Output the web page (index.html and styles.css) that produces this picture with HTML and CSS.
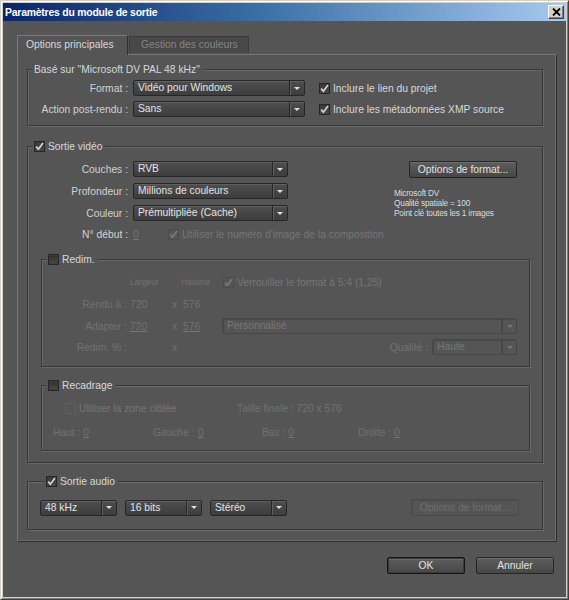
FILE: index.html
```html
<!DOCTYPE html>
<html lang="fr">
<head>
<meta charset="utf-8">
<title>Paramètres du module de sortie</title>
<link rel="stylesheet" href="styles.css">
</head>
<body>
<div class="window">
  <div class="titlebar">
    <span class="title">Paramètres du module de sortie</span>
    <span class="close"><svg width="9" height="8" viewBox="0 0 9 8"><path d="M1 0.5 L8 7.5 M8 0.5 L1 7.5" stroke="#000" stroke-width="1.8"/></svg></span>
  </div>
  <div class="client">
    <div class="tabs">
      <div class="tab active">Options principales</div>
      <div class="tab inactive">Gestion des couleurs</div>
    </div>
    <div class="panel">
      <fieldset class="group g-base">
        <legend>Basé sur "Microsoft DV PAL 48 kHz"</legend>
        <div class="base-grid">
          <span class="lbl">Format :</span>
          <div class="dd w172"><span class="dd-val">Vidéo pour Windows</span><span class="dd-btn"></span></div>
          <div class="chk"><span class="cb on"><svg width="9" height="9" viewBox="0 0 9 9"><path d="M1.2 4.6 L3.4 7.2 L8 1" /></svg></span>Inclure le lien du projet</div>
          <span class="lbl">Action post-rendu :</span>
          <div class="dd w172"><span class="dd-val">Sans</span><span class="dd-btn"></span></div>
          <div class="chk"><span class="cb on"><svg width="9" height="9" viewBox="0 0 9 9"><path d="M1.2 4.6 L3.4 7.2 L8 1" /></svg></span>Inclure les métadonnées XMP source</div>
        </div>
      </fieldset>

      <fieldset class="group g-video">
        <legend><span class="cb on"><svg width="9" height="9" viewBox="0 0 9 9"><path d="M1.2 4.6 L3.4 7.2 L8 1" /></svg></span>Sortie vidéo</legend>
        <div class="video-top">
          <div class="video-left">
            <div class="frow"><span class="lbl">Couches :</span><div class="dd w155"><span class="dd-val">RVB</span><span class="dd-btn"></span></div></div>
            <div class="frow"><span class="lbl">Profondeur :</span><div class="dd w155"><span class="dd-val">Millions de couleurs</span><span class="dd-btn"></span></div></div>
            <div class="frow"><span class="lbl">Couleur :</span><div class="dd w155"><span class="dd-val">Prémultipliée (Cache)</span><span class="dd-btn"></span></div></div>
          </div>
          <div class="video-right">
            <div class="btn fmt">Options de format...</div>
            <div class="info">
              <div>Microsoft DV</div>
              <div>Qualité spatiale = 100</div>
              <div>Point clé toutes les 1 images</div>
            </div>
          </div>
        </div>
        <div class="start-row">
          <span class="lbl">N° début :</span>
          <span class="num dis"><u>0</u></span>
          <span class="chk dis"><span class="cb dis"><svg width="9" height="9" viewBox="0 0 9 9"><path d="M1.2 4.6 L3.4 7.2 L8 1" /></svg></span>Utiliser le numéro d'image de la composition</span>
        </div>

        <fieldset class="group sub g-redim">
          <legend><span class="cb off"></span>Redim.</legend>
          <div class="rrow head">
            <span class="r-label"></span>
            <span class="r-v1 small">Largeur</span>
            <span class="r-x"></span>
            <span class="r-v2 small">Hauteur</span>
            <span class="chk dis"><span class="cb dis"><svg width="9" height="9" viewBox="0 0 9 9"><path d="M1.2 4.6 L3.4 7.2 L8 1" /></svg></span>Verrouiller le format à 5:4 (1,25)</span>
          </div>
          <div class="rrow">
            <span class="r-label">Rendu à :</span>
            <span class="r-v1">720</span>
            <span class="r-x">x</span>
            <span class="r-v2">576</span>
          </div>
          <div class="rrow">
            <span class="r-label">Adapter :</span>
            <span class="r-v1"><u>720</u></span>
            <span class="r-x">x</span>
            <span class="r-v2"><u>576</u></span>
            <div class="dd dis grow"><span class="dd-val">Personnalisé</span><span class="dd-btn"></span></div>
          </div>
          <div class="rrow">
            <span class="r-label">Redim. % :</span>
            <span class="r-v1"></span>
            <span class="r-x">x</span>
            <span class="r-v2"></span>
            <span class="q-label">Qualité :</span>
            <div class="dd dis w85"><span class="dd-val">Haute</span><span class="dd-btn"></span></div>
          </div>
        </fieldset>

        <fieldset class="group sub g-crop">
          <legend><span class="cb off"></span>Recadrage</legend>
          <div class="crow">
            <span class="chk dis zone"><span class="cb dis empty"></span>Utiliser la zone ciblée</span>
            <span class="final">Taille finale : 720 x 576</span>
          </div>
          <div class="crow">
            <span class="c1">Haut : <u>0</u></span>
            <span class="c2">Gauche : <u>0</u></span>
            <span class="c3">Bas : <u>0</u></span>
            <span class="c4">Droite : <u>0</u></span>
          </div>
        </fieldset>
      </fieldset>

      <fieldset class="group g-audio">
        <legend><span class="cb on"><svg width="9" height="9" viewBox="0 0 9 9"><path d="M1.2 4.6 L3.4 7.2 L8 1" /></svg></span>Sortie audio</legend>
        <div class="audio-row">
          <div class="dd w77"><span class="dd-val">48 kHz</span><span class="dd-btn"></span></div>
          <div class="dd w77"><span class="dd-val">16 bits</span><span class="dd-btn"></span></div>
          <div class="dd w77"><span class="dd-val">Stéréo</span><span class="dd-btn"></span></div>
          <div class="btn fmt disabled">Options de format...</div>
        </div>
      </fieldset>
    </div>
    <div class="buttons">
      <div class="btn dlg default">OK</div>
      <div class="btn dlg">Annuler</div>
    </div>
  </div>
</div>
</body>
</html>
```
FILE: styles.css
```css
* { box-sizing: border-box; }
html, body { margin: 0; padding: 0; }
body {
  width: 569px;
  height: 600px;
  overflow: hidden;
  background: #d4d0c8;
  font-family: "Liberation Sans", Arial, sans-serif;
  font-size: 10.3px;
  color: #d4d4d4;
}
.window {
  width: 569px;
  height: 600px;
  border: 1px solid;
  border-color: #d4d0c8 #404040 #404040 #d4d0c8;
  box-shadow: inset 1px 1px 0 #ffffff, inset -1px -1px 0 #808080;
  padding: 2px;
  background: #d4d0c8;
  display: flex;
  flex-direction: column;
}
.titlebar {
  height: 18px;
  flex: none;
  background: linear-gradient(90deg, #0a246a 0%, #3a6ea5 45%, #a6caf0 100%);
  display: flex;
  align-items: center;
  justify-content: space-between;
  padding: 0 2px 0 2px;
}
.title {
  color: #fff;
  font-weight: bold;
  font-size: 10.4px;
  letter-spacing: -0.2px;
}
.close {
  width: 16px;
  height: 14px;
  background: #d4d0c8;
  border: 1px solid;
  border-color: #fff #404040 #404040 #fff;
  box-shadow: inset -1px -1px 0 #808080;
  display: flex;
  align-items: center;
  justify-content: center;
}
.client {
  flex: 1;
  background: #555555;
  padding: 14px 11px 0 14px;
  display: flex;
  flex-direction: column;
}
.tabs {
  display: flex;
  align-items: flex-end;
  height: 19px;
  position: relative;
  z-index: 1;
}
.tab {
  height: 17px;
  line-height: 16px;
  padding: 0 9px;
  white-space: nowrap;
}
.tab.active {
  height: 20px;
  margin-bottom: -1px;
  width: 111px;
  padding: 1px 8px 0;
  background: #555555;
  border: 1px solid;
  border-bottom: none;
  border-color: #7a7a7a #303030 transparent #7a7a7a;
  color: #d8d8d8;
}
.tab.inactive {
  width: 120px;
  margin-bottom: 1px;
  margin-left: 1px;
  background: #484848;
  border: 1px solid #3c3c3c;
  border-bottom: none;
  color: #858585;
  padding-left: 11px;
}
.panel {
  width: 540px;
  height: 488px;
  border: 1px solid;
  border-color: #767676 #2e2e2e #2e2e2e #767676;
  box-shadow: inset -1px -1px 0 #6a6a6a;
  padding: 8px 0 0 9px;
}

/* group boxes */
.group {
  margin: 0;
  padding: 0;
  min-width: 0;
  border: 1px solid #383838;
  box-shadow: inset 1px 1px 0 #686868, 1px 1px 0 #686868;
  width: 516px;
}
.group legend {
  margin-left: 4px;
  padding: 0 3px 0 2px;
  line-height: 13px;
  height: 13px;
  background: #555555;
  color: #d8d8d8;
  display: flex;
  align-items: center;
  gap: 3px;
}
.g-base { padding: 4px 0 8px 0; }
.g-video { margin-top: 14px; padding: 8px 0 11px 0; }
.g-audio { margin-top: 12px; padding: 11px 23px 13px 12px; }
.sub { width: 489px; margin-left: 13px; }
.g-redim { margin-top: 12px; padding: 8px 12px 11px 0; }
.g-crop { margin-top: 12px; padding: 8px 12px 10px 0; }

.lbl { text-align: right; white-space: nowrap; color: #d2d2d2; }

.base-grid {
  display: grid;
  grid-template-columns: 100px 172px auto;
  column-gap: 5px;
  row-gap: 5px;
  align-items: center;
}
.base-grid .chk { margin-left: 9px; }

/* checkbox */
.chk { display: flex; align-items: center; gap: 3px; white-space: nowrap; color: #d8d8d8; }
.chk.dis { color: #767676; }
.cb {
  width: 11px;
  height: 11px;
  flex: none;
  display: inline-flex;
  align-items: center;
  justify-content: center;
  border: 1px solid #262626;
  background: linear-gradient(#3a3a3a, #474747);
}
.cb svg path { fill: none; stroke: #d6d6d6; stroke-width: 1.7; }
.cb.off { background: linear-gradient(#2f2f2f, #4a4a4a); box-shadow: inset 0 0 0 1px #3e3e3e; }
.cb.dis { border-color: #4c4c4c; background: transparent; }
.cb.dis svg path { stroke: #7a7a7a; }
.cb.empty { border: 1px dotted #6a6a6a; }

/* dropdowns */
.dd {
  height: 16px;
  display: flex;
  border: 1px solid #262626;
  border-radius: 2px;
  background: linear-gradient(#4e4e4e, #3d3d3d);
  box-shadow: inset 0 1px 0 #606060;
  color: #e4e4e4;
}
.dd-val { flex: 1; padding-left: 4px; line-height: 14px; white-space: nowrap; overflow: hidden; }
.dd-btn {
  width: 15px;
  flex: none;
  border-left: 1px solid #262626;
  box-shadow: inset 1px 0 0 #5e5e5e;
  display: flex;
  align-items: center;
  justify-content: center;
}
.dd-btn::after {
  content: "";
  border-left: 3px solid transparent;
  border-right: 3px solid transparent;
  border-top: 3px solid #e0e0e0;
}
.dd.dis {
  background: #555555;
  border-color: #474747;
  box-shadow: inset 1px 1px 0 #4a4a4a;
  color: #777;
}
.dd.dis .dd-btn { border-left: 2px double #474747; box-shadow: none; }
.dd.dis .dd-btn::after { border-top-color: #777; }
.w172 { width: 172px; }
.w155 { width: 155px; }
.w85 { width: 85px; }
.w77 { width: 77px; }
.grow { flex: 1; }

/* video */
.video-top { display: flex; }
.video-left { width: 260px; display: flex; flex-direction: column; gap: 6px; }
.frow { display: flex; align-items: center; gap: 5px; }
.frow .lbl { width: 100px; }
.video-right { margin-left: 106px; }
.btn {
  height: 17px;
  border: 1px solid #262626;
  border-radius: 2px;
  background: linear-gradient(#5e5e5e, #464646);
  box-shadow: inset 0 1px 0 #6e6e6e;
  color: #e2e2e2;
  text-align: center;
  line-height: 15px;
  white-space: nowrap;
}
.btn.fmt { width: 108px; margin-left: 15px; }
.btn.fmt.disabled {
  margin-left: auto;
  background: #555555;
  border-color: #4a4a4a;
  box-shadow: inset 1px 1px 0 #4c4c4c;
  color: #6f6f6f;
}
.info {
  margin-top: 10px;
  font-size: 8.3px;
  line-height: 10px;
  color: #dcdcdc;
  letter-spacing: -0.2px;
}
.start-row { display: flex; align-items: center; height: 14px; margin-top: 6px; }
.start-row .lbl { width: 100px; color: #d2d2d2; }
.num { width: 40px; padding-left: 5px; }
.dis, .dis u { color: #767676; }
u { text-decoration-color: #767676; }

/* redim */
.rrow { display: flex; align-items: center; height: 16px; color: #727272; }
.rrow + .rrow { margin-top: 6px; }
.rrow:last-child { margin-top: 5px; }
.r-label { width: 85px; text-align: right; flex: none; }
.r-v1 { width: 42px; padding-left: 3px; flex: none; }
.r-x { width: 12px; padding-left: 3px; flex: none; }
.r-v2 { width: 41px; padding-left: 2px; flex: none; }
.small { font-size: 8.3px; }
.head .r-v2 { padding-left: 0; }
.head .chk { margin-left: 1px; }
.q-label { margin-left: auto; margin-right: 4px; }

/* recadrage */
.crow { display: flex; align-items: center; height: 16px; color: #727272; }
.crow + .crow { margin-top: 8px; }
.zone { margin-left: 23px; width: 172px; }
.c1 { margin-left: 11px; width: 100px; }
.c2 { width: 109px; }
.c3 { width: 96px; }

/* audio */
.audio-row { display: flex; align-items: center; gap: 8px; }

/* dialog buttons */
.buttons { display: flex; justify-content: flex-end; gap: 11px; margin-top: 15px; padding-right: 1px; }
.btn.dlg { width: 78px; }
.btn.default { border-color: #141414; box-shadow: inset 0 0 0 1px #3a3a3a, inset 0 2px 0 #6a6a6a; }
```
